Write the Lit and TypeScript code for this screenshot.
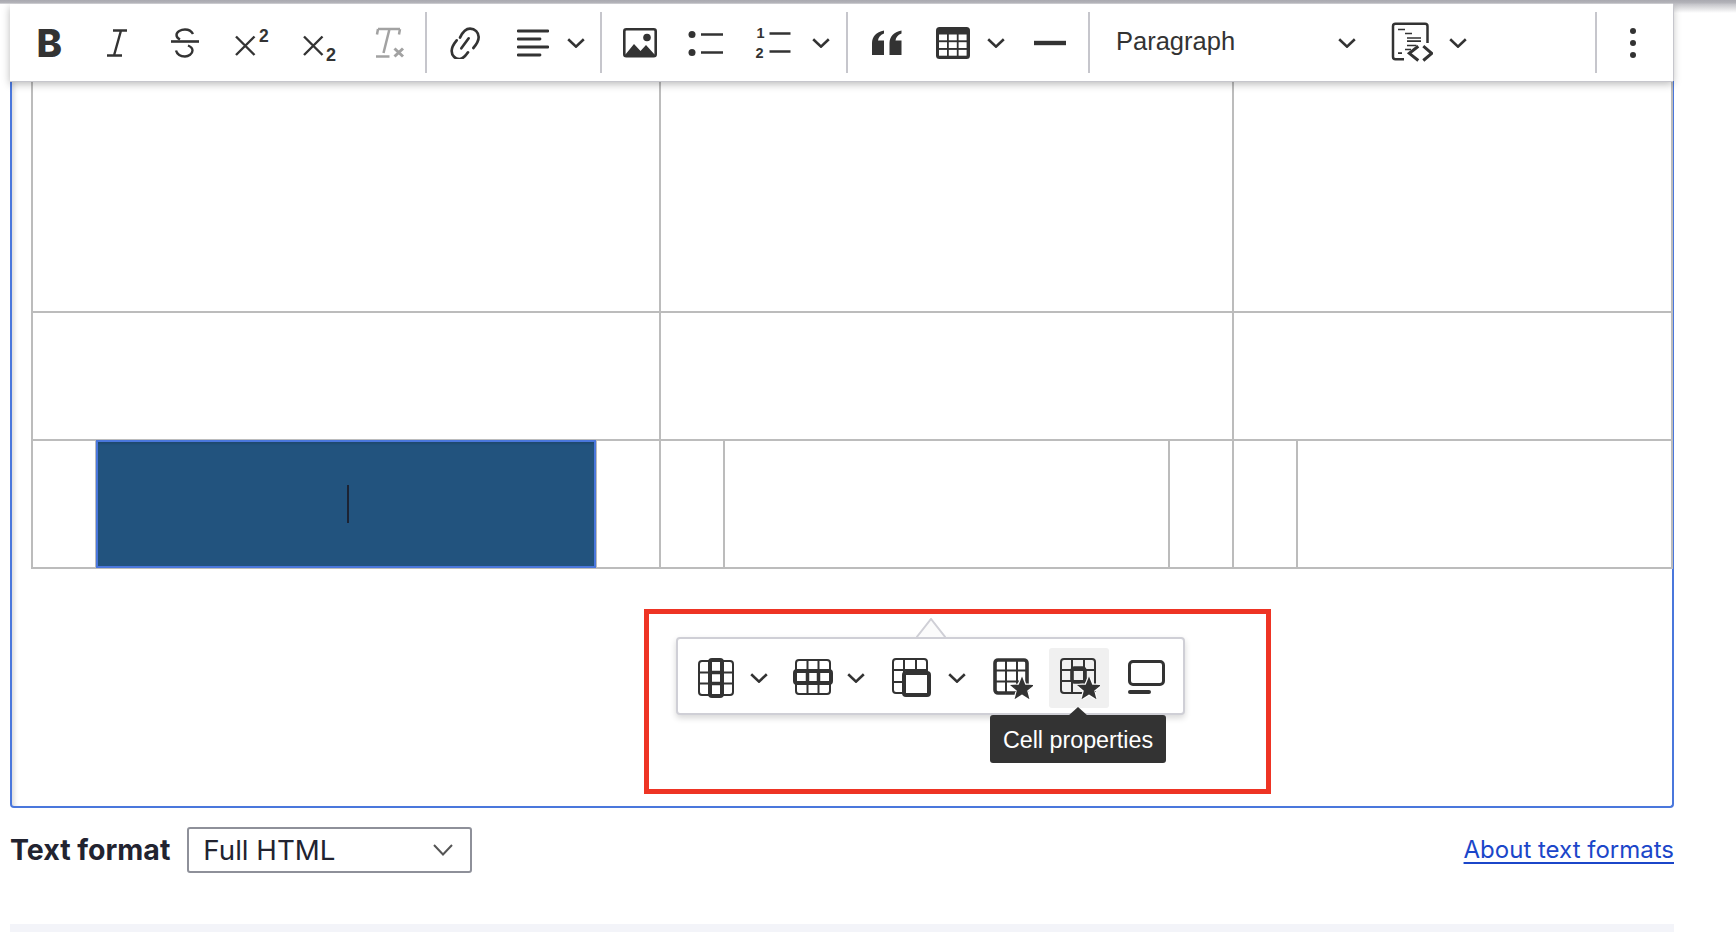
import { LitElement, html, css, svg } from "lit";
import { customElement } from "lit/decorators.js";

const chev = html`<svg class="chev" width="18" height="10" viewBox="0 0 18 10"><path d="M1.2 1.2 9 8.6 16.8 1.2" fill="none" stroke="#333" stroke-width="2.6"/></svg>`;
const star = (cx: number, cy: number) => {
  const pts: string[] = [];
  for (let i = 0; i < 10; i++) {
    const r = i % 2 ? 3.9 : 9;
    const a = -Math.PI / 2 + (i * Math.PI) / 5;
    pts.push(`${(cx + r * Math.cos(a)).toFixed(1)},${(cy + r * Math.sin(a)).toFixed(1)}`);
  }
  const p = pts.join(" ");
  return svg`<polygon points=${p} fill="#fff" stroke="#fff" stroke-width="5" stroke-linejoin="round"/><polygon points=${p} fill="#333"/>`;
};
const ic = (w: number, h: number, body: unknown) =>
  html`<svg width=${w} height=${h} viewBox="0 0 ${w} ${h}" fill="none" stroke="#333" stroke-width="2.6">${body}</svg>`;

const icons: Record<string, unknown> = {
  bold: ic(30, 50, svg`<text x="1.500" y="38.500" font-family="Inter" font-weight="800" font-size="38.500" fill="#333" stroke="none">B</text>`),
  italic: ic(22, 28, svg`<path d="M7 1.500H21M1 26.500H16M15 1.500 8 26.500" stroke-width="2.400"/>`),
  strike: ic(30, 30, svg`<path d="M1 13.500H29" stroke-width="2.600"/><path d="M23 6C21.500 3 18 1.500 15 1.500 11 1.500 6.500 3.500 6.500 7 6.500 9 8 10.500 10 11.500M18 17.500C20.500 18.500 22.500 20 22.500 22.500 22.500 26 18.500 28.500 15 28.500 10.500 28.500 7 26 6 22.500" stroke-width="2.400"/>`),
  sup: ic(36, 44, svg`<path d="M2 15.500 20.500 34M20.500 15.500 2 34" stroke-width="2.400"/><text x="25" y="20.500" font-family="Liberation Sans" font-size="17.500" font-weight="700" fill="#333" stroke="none">2</text>`),
  sub: ic(36, 44, svg`<path d="M2 15.500 20.500 34M20.500 15.500 2 34" stroke-width="2.400"/><text x="24" y="39.500" font-family="Liberation Sans" font-weight="700" font-size="18" fill="#333" stroke="none">2</text>`),
  clear: ic(32, 31, svg`<g stroke="#a2a2a2"><path d="M5 2H27M3 29.500H16.500M16.500 2 10.500 26M5 2 4 7.500M27 2 26 7.500" stroke-width="2.500"/><path d="M21.500 21.500 30 29.500M30 21.500 21.500 29.500" stroke-width="3"/></g>`),
  link: html`<svg width="30" height="32" viewBox="30 30 90 96" fill="none" stroke="#333" stroke-width="8" stroke-linecap="round"><path d="M60 62C68 45 78 35 90 35 105 35 116 46 116 60 116 72 108 84 100 93"/><path d="M50 70C40 82 35 92 35 102 35 116 46 126 58 126 68 126 76 118 84 106"/><path d="M64 94 86 64"/></svg>`,
  align: ic(32, 28, svg`<path d="M1 2H31M1 10H23M1 18H31M1 26H23" stroke-width="2.800" stroke-linecap="round"/>`),
  image: ic(34, 30, svg`<rect x="1.300" y="1.300" width="31.400" height="27" rx="2"/><circle cx="24" cy="9.500" r="3.800" fill="#333" stroke="none"/><path d="M2 27 11 16 17.500 23 23 17 32 27Z" fill="#333" stroke="none"/>`),
  bullets: ic(36, 28, svg`<circle cx="4" cy="5.500" r="3.500" fill="#333" stroke="none"/><circle cx="4" cy="23.500" r="3.500" fill="#333" stroke="none"/><path d="M13 5.500H35M13 23.500H35" stroke-width="2.600"/>`),
  numbered: ic(36, 46, svg`<text x="1.500" y="18" font-family="Liberation Sans" font-weight="700" font-size="14.500" fill="#333" stroke="none">1</text><text x="0.500" y="38" font-family="Liberation Sans" font-weight="700" font-size="14.500" fill="#333" stroke="none">2</text><path d="M14.500 13.500H35.500M14.500 31.500H35.500" stroke-width="2.600"/>`),
  quote: ic(30, 26, svg`<g fill="#333" stroke="none"><path d="M0 25V13C0 7 4 2 12 0.500V3.500C8 5 6.500 7.500 6 10.500H12V25Z"/><path d="M17.500 25V13C17.500 7 21.500 2 29.500 0.500V3.500C25.500 5 24 7.500 23.500 10.500H29.500V25Z"/></g>`),
  table: ic(34, 32, svg`<rect x="0" y="0" width="34" height="32" rx="3.500" fill="#333" stroke="none"/><g fill="#fff" stroke="none">${[7.5, 15.2, 22.9].map((y) => [3, 12.8, 22.6].map((x) => svg`<rect x=${x} y=${y} width="8" height="5.800"/>`))}</g>`),
  hr: ic(34, 6, svg`<path d="M2 3H34" stroke-width="4.400"/>`),
  source: ic(42, 42, svg`<path d="M13 37.300H4.500A2.500 2.500 0 0 1 2 34.800V4.200A2.500 2.500 0 0 1 4.500 1.700H34A2.500 2.500 0 0 1 36.500 4.200V21" stroke-width="2.500"/><path d="M7 7.500H14M14 11.500H21M16 16H30M16 19.200H30M16 23.500H25.500M14 27.500H20M7 31.200H11" stroke-width="1.700"/><path d="M27.300 24.200 18.300 31.300 27.300 38.500M32.300 24.200 40.700 31.300 32.300 38.500" stroke-width="3"/>`),
  dots: ic(8, 30, svg`<g fill="#333" stroke="none"><circle cx="4" cy="3" r="3"/><circle cx="4" cy="15" r="3"/><circle cx="4" cy="27" r="3"/></g>`),
  col: ic(36, 40, svg`<rect x="1" y="3" width="34" height="34" rx="3" stroke-width="2"/><path d="M1 14.500H35M1 25.500H35" stroke-width="2"/><rect x="12" y="2" width="12" height="36" rx="2" stroke-width="4"/><path d="M12 14.500H24M12 25.500H24" stroke-width="3.500"/>`),
  row: ic(40, 38, svg`<rect x="3" y="1" width="34" height="34" rx="3" stroke-width="2"/><path d="M14.500 1V35M25.500 1V35" stroke-width="2"/><rect x="2" y="12" width="36" height="12" rx="2" stroke-width="4"/><path d="M14.500 12V24M25.500 12V24" stroke-width="3.500"/>`),
  merge: ic(39, 40, svg`<rect x="1" y="1" width="34" height="34" rx="3" stroke-width="2"/><path d="M12 1V15M24 1V15M1 12H35M1 24H12" stroke-width="2"/><rect x="12" y="15" width="25" height="22" rx="2" stroke-width="4" fill="#fff"/>`),
  tprops: ic(40, 42, svg`<rect x="2" y="3" width="32" height="33" rx="3" stroke-width="3.600"/><path d="M13 3V35M24 3V28M2 13.500H34M2 24.500H28" stroke-width="2"/>${star(29, 32)}`),
  cprops: ic(40, 42, svg`<rect x="1" y="2" width="34" height="34" rx="3" stroke-width="2"/><path d="M12 2V36M24 2V28M1 13H35M1 24H28" stroke-width="2"/><rect x="12" y="11" width="13" height="14" rx="2.500" stroke-width="3.600"/>${star(29, 32)}`),
  caption: ic(37, 36, svg`<rect x="1.500" y="1.500" width="34" height="23" rx="3.500" stroke-width="3"/><path d="M2 32H21" stroke-width="4" stroke-linecap="round"/>`),
};

type Item = [string, number];
const toolbarItems: Item[] = [
  ["bold", 68], ["italic", 65], ["strike", 72], ["sup", 62], ["sub", 74], ["clear", 64], ["|", 10],
  ["link", 68], ["align", 68], ["v", 18], ["|", 32],
  ["image", 46], ["bullets", 86], ["numbered", 48], ["v", 48], ["|", 4],
  ["quote", 76], ["table", 56], ["v", 30], ["hr", 76], ["|", 4],
  ["para", 293], ["source", 56], ["v", 36], ["~", 0], ["|", 4], ["dots", 70],
];
const balloonItems: Item[] = [
  ["col", 40], ["v", 46], ["row", 62], ["v", 24], ["_", 4], ["merge", 78], ["v", 14], ["_", 29],
  ["tprops", 40], ["_", 16], ["cprops", 60], ["caption", 74],
];

@customElement("app-root")
export class AppRoot extends LitElement {
  static styles = css`
    :host { display: block; position: relative; width: 1736px; height: 932px; overflow: hidden; background: #fff; font-family: "Liberation Sans", Arial, sans-serif; }
    .strip { position: absolute; left: 0; right: 0; top: 0; height: 4px; z-index: 3; background: linear-gradient(#a9a9b0, #b4b4ba 75%, rgba(200,200,205,.4)); }
    .fade { position: absolute; right: 0; top: 0; width: 63px; height: 13px; z-index: 2; background: linear-gradient(#a9a9b0, rgba(255,255,255,0)); }
    .page { padding: 4px 62px 0 10px; width: 1664px; }
    .toolbar { position: relative; z-index: 2; display: flex; align-items: center; height: 77px; margin-right: 1px; box-sizing: border-box; padding: 0 5px 0 6px; background: #fff; box-shadow: 0 1px 0 #c6c6cc, 1px 0 0 #c6c6cc, 0 3px 8px rgba(0,0,0,.28); }
    .slot { display: flex; align-items: center; justify-content: center; height: 100%; flex: none; }
    .slot svg { display: block; flex: none; }
    .spacer { flex: 1; }
    .sep { align-self: center; width: 2px; height: 61px; background: #c6c6cc; }
    .para { justify-content: space-between; box-sizing: border-box; padding: 0 28px 2px 25px; font-size: 25.500px; color: #333; }
    .para svg { margin-top: 2px; }
    .editor { position: relative; height: 727px; box-sizing: border-box; border: 2px solid #4a77dc; border-top: 0; border-radius: 0 0 4px 4px; padding-left: 19px; box-shadow: inset 6px 0 5px -4px rgba(0,0,0,.16); }
    table { border-collapse: collapse; table-layout: fixed; width: 1640px; }
    td { border: 2px solid #bcbcbc; padding: 0; text-align: center; }
    tr.r1 { height: 231px; } tr.r2, tr.r3 { height: 128px; }
    tr.r1 td { border-top: 0; }
    td.sel { background: #22537e; outline: 2px solid #4a77dc; outline-offset: -2px; box-shadow: inset 0 3px 2px rgba(0,0,0,.12); }
    .caret { display: inline-block; width: 2px; height: 38px; margin-left: 4px; background: #1c2333; vertical-align: middle; }
    .mark { position: absolute; left: 632px; top: 528px; width: 627px; height: 185px; box-sizing: border-box; border: 5.500px solid #ee3424; }
    .balloon { position: absolute; left: 664px; top: 556px; width: 509px; height: 78px; box-sizing: border-box; display: flex; align-items: center; padding: 4px 0 0 18px; background: #fff; border: 2px solid #cfcfd6; border-radius: 4px; box-shadow: 0 3px 6px rgba(0,0,0,.16); }
    .tip { position: absolute; left: 238px; top: -21px; width: 30px; height: 20px; }
    .hover { background: #f0f0f0; border-radius: 3px; height: 60px; box-sizing: border-box; padding-left: 2px; }
    .tooltip { position: absolute; left: 978px; top: 634px; width: 176px; height: 48px; box-sizing: border-box; padding-top: 2px; z-index: 3; display: flex; align-items: center; justify-content: center; background: #333; color: #fff; border-radius: 3px; font-size: 23.300px; }
    .tooltip::before { content: ""; position: absolute; left: 78px; top: -8px; border: 10px solid transparent; border-top: 0; border-bottom: 9px solid #333; }
    .fmt { display: flex; align-items: center; margin-top: 19px; height: 47px; font-family: Inter, sans-serif; color: #222330; }
    .lab { font-weight: 700; font-size: 28.500px; margin: 0 0 2px 0; }
    .select { width: 285px; height: 46px; align-self: flex-start; box-sizing: border-box; margin-left: 17px; padding: 0 17px 1px 14px; display: flex; align-items: center; justify-content: space-between; border: 2px solid #8e9099; border-radius: 3px; font-size: 27.700px; }
    .link { margin-left: auto; margin-bottom: 2px; color: #1b46c9; font-size: 24px; text-decoration: underline; text-underline-offset: 4px; }
    .band { margin-top: 50px; height: 20px; background: #f3f4f9; }
  `;

  private renderItem([name, w]: Item) {
    const width = `width:${w}px`;
    if (name === "~") return html`<div class="spacer"></div>`;
    if (name === "_") return html`<div class="slot" style=${width}></div>`;
    if (name === "|") return html`<div class="slot" style=${width}><div class="sep"></div></div>`;
    if (name === "v") return html`<div class="slot" style=${width}>${chev}</div>`;
    if (name === "para") return html`<div class="slot para" style=${width}><span>Paragraph</span>${chev}</div>`;
    return html`<div class="slot ${name === "cprops" ? "hover" : ""}" style=${width}>${icons[name]}</div>`;
  }

  render() {
    return html`
      <div class="strip"></div>
      <div class="fade"></div>
      <div class="page">
        <div class="toolbar">${toolbarItems.map((i) => this.renderItem(i))}</div>
        <div class="editor">
          <table>
            <colgroup>${[64, 500, 64, 64, 445, 64, 64, 375].map((w) => html`<col style="width:${w}px" />`)}</colgroup>
            <tr class="r1"><td colspan="3"></td><td colspan="3"></td><td colspan="2"></td></tr>
            <tr class="r2"><td colspan="3"></td><td colspan="3"></td><td colspan="2"></td></tr>
            <tr class="r3"><td></td><td class="sel"><span class="caret"></span></td><td></td><td></td><td></td><td></td><td></td><td></td></tr>
          </table>
          <div class="mark"></div>
          <div class="balloon">
            <svg class="tip" viewBox="0 0 30 20"><path d="M0 20 15 1 30 20Z" fill="#fbfbfb" stroke="#cfcfd6" stroke-width="2"/></svg>
            ${balloonItems.map((i) => this.renderItem(i))}
          </div>
          <div class="tooltip">Cell properties</div>
        </div>
        <div class="fmt">
          <span class="lab">Text format</span>
          <div class="select"><span>Full HTML</span><svg width="20" height="12" viewBox="0 0 20 12"><path d="M1 1 10 10.500 19 1" fill="none" stroke="#555" stroke-width="2"/></svg></div>
          <a class="link">About text formats</a>
        </div>
        <div class="band"></div>
      </div>
    `;
  }
}
